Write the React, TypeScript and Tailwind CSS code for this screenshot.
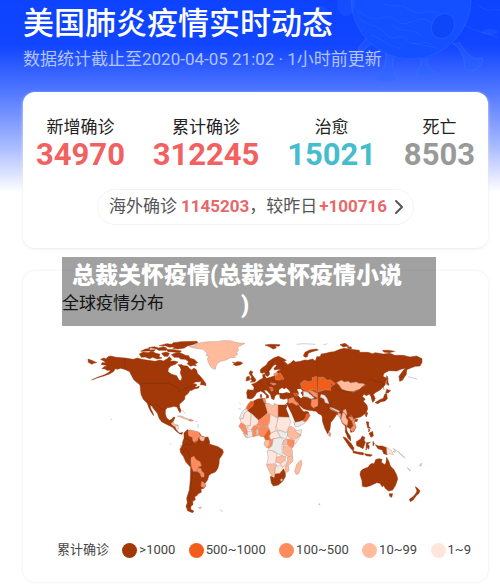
import { ChevronRight } from 'lucide-react';

const STATS = [
  { label: '新增确诊', value: '34970', color: 'text-[#f26161]' },
  { label: '累计确诊', value: '312245', color: 'text-[#f26161]' },
  { label: '治愈', value: '15021', color: 'text-[#45bdcd]' },
  { label: '死亡', value: '8503', color: 'text-[#999999]' },
];

const LEGEND = [
  { label: '>1000', color: 'bg-[#a23708]' },
  { label: '500~1000', color: 'bg-[#f25d1b]' },
  { label: '100~500', color: 'bg-[#ff8a5c]' },
  { label: '10~99', color: 'bg-[#ffbb9c]' },
  { label: '1~9', color: 'bg-[#ffe6dd]' },
];

const L1 = '#a23708';
const L2 = '#f25d1b';
const L3 = '#ff8a5c';
const L4 = '#ffbb9c';
const L5 = '#ffe6dd';
const NONE = '#ececec';
const SEA = '#ffffff';

type Shape = [fill: string, d: string];

const AMERICAS: Shape[] = [
  // Canada, USA, Mexico
  [L1, 'M62 88L72 84L78 87L84 80L92 78L108 82L135 84L160 88L172 84L185 88L205 91L225 94L240 90L250 93L262 86L268 80L275 88L270 94L283 93L294 96L286 103L272 108L265 116L264 125L275 133L290 137L297 150L303 152L306 141L301 130L303 118L300 110L308 107L322 108L330 117L335 120L342 114L350 120L352 130L362 140L370 150L360 155L345 156L338 163L345 161L351 165L344 170L350 172L358 168L356 174L342 177L336 181L329 182L325 190L315 198L314 208L308 214L298 223L299 232L303 242L300 248L295 240L291 231L281 229L275 231L262 233L256 240L256 252L260 264L268 271L276 268L279 262L285 262L280 274L273 280L279 286L290 292L291 303L300 310L308 307L306 313L300 312L288 303L278 292L262 284L246 276L238 266L232 250L219 234L216 228L210 226L213 237L219 249L221 257L213 246L207 234L202 220L190 208L183 193L180 165L174 160L162 150L155 137L148 124L138 119L122 115L113 118L106 116L100 125L88 132L74 137L50 144L35 150L55 141L74 134L87 127L92 121L80 121L76 117L66 116L72 110L80 109L76 105L64 104L66 98L77 98L73 94Z'],
  [L1, 'M24 87L38 92L50 98L42 99L36 103L25 97Z'],
  [L1, 'M178 72L190 66L204 68L215 64L228 70L240 73L237 80L246 84L232 87L218 82L209 86L196 81L184 82Z'],
  [L1, 'M182 64L194 58L210 55L208 60L226 59L222 64L206 63Z'],
  [L1, 'M206 53L224 50L236 54L250 50L260 54L258 61L236 61L228 56Z'],
  [L1, 'M245 70L258 66L268 70L264 79L252 79Z'],
  [L1, 'M238 47L260 41L275 43L280 38L304 35L350 34L354 38L338 44L322 48L313 54L294 57L278 55L285 50L268 52L256 47Z'],
  [L1, 'M258 58L282 59L304 63L300 68L282 66L264 65Z'],
  [L1, 'M274 74L288 68L304 70L316 76L326 77L330 85L342 88L353 98L345 101L349 108L340 106L332 109L322 102L326 95L316 88L302 87L296 82L282 82Z'],
  [L1, 'M294 104L306 104L312 111L302 113Z'],
  [L1, 'M364 154L370 151L377 160L378 167L371 165L361 164Z'],
  [L4, 'M328 50L346 47L342 43L362 38L386 35L410 35L428 32L450 32L464 36L478 39L495 40L482 47L472 52L476 60L470 68L473 74L462 77L467 82L451 83L438 90L422 94L413 100L408 108L406 118L397 115L390 108L385 96L382 87L386 80L378 76L382 70L374 63L370 58L354 56L343 54Z'],
  [L1, 'M457 97L466 98L472 95L484 96L488 100L480 105L468 107L460 103L464 101Z'],
  // Caribbean and Central America
  [L4, 'M292 258L304 258L315 263L325 268L315 267L302 262Z'],
  [L3, 'M322 269L331 267L342 272L332 274Z'],
  [L4, 'M273 281L280 276L283 283L294 285L292 292L282 289Z'],
  [L5, 'M285 289L295 287L294 302L289 299Z'],
  // South America
  [L1, 'M312 309L322 299L330 302L358 308L364 318L375 322L384 321L389 335L388 342L400 346L414 350L428 359L430 367L426 376L418 387L417 402L413 416L406 426L393 431L386 437L383 449L374 462L377 468L372 475L363 477L364 487L354 491L352 496L344 500L346 509L338 514L339 524L333 528L332 538L342 544L337 548L323 542L318 529L322 518L320 505L328 480L331 450L332 412L318 397L310 379L302 368L300 357L307 347L308 336L312 325Z'],
  [L3, 'M324 303L332 300L356 306L361 318L354 325L353 333L344 338L339 334L337 322L326 317Z'],
  [L4, 'M361 317L368 321L375 321L371 334L363 333L358 324Z'],
  [L3, 'M333 383L342 379L348 389L360 395L364 407L355 411L350 424L340 424L335 411L333 400Z'],
  [L3, 'M354 415L362 415L365 424L372 430L372 441L364 441L361 431L351 423Z'],
  [L3, 'M365 454L373 459L378 465L372 473L363 469Z'],
  [L4, 'M355 533L365 531L361 536Z'],
];

// Europe, Africa, Middle East and western Russia
const EMEA: Shape[] = [
  [L1, 'M300 80L290 84L276 83L270 93L263 87L248 91L239 90L226 94L212 96L205 91L197 99L188 104L183 98L176 95L184 91L172 84L160 79L146 84L137 90L129 96L124 105L112 113L106 119L107 128L113 130L118 127L123 137L129 139L134 132L132 124L138 116L144 108L151 103L155 107L147 115L148 120L161 118L168 119L158 123L153 130L147 138L136 142L125 145L121 140L119 132L113 134L114 145L105 149L96 156L89 160L80 163L87 171L86 181L68 179L65 187L67 205L75 207L84 204L91 196L95 188L107 183L116 188L125 197L124 205L131 203L130 196L121 188L117 180L125 181L136 193L140 206L147 209L149 200L155 193L164 193L165 205L176 208L188 205L189 217L182 222L186 234L196 251L207 277L210 286L225 281L243 271L253 255L250 246L241 244L237 246L228 236L220 224L226 228L235 236L247 240L262 242L273 244L282 252L300 250Z'],
  [L1, 'M72 130L76 122L84 126L80 132L87 142L93 149L90 155L76 157L82 151L76 148L80 141Z'],
  [L1, 'M65 141L73 139L74 150L63 153Z'],
  [L1, 'M120 45L137 43L165 44L163 48L150 49L154 54L144 57L135 51Z'],
  [L1, 'M235 77L240 67L254 60L274 57L280 60L261 65L250 70L247 80L240 82Z'],
  [L1, 'M106 194L110 193L110 203L106 202Z'],
  // inland seas
  [SEA, 'M162 180L171 173L178 178L183 173L193 182L196 189L184 187L174 190L162 189Z'],
  [SEA, 'M216 178L227 176L233 183L227 188L234 200L228 205L220 197L221 188Z'],
  [SEA, 'M184 219L188 228L200 252L211 278L207 279L195 257L184 239Z'],
  // eastern Europe
  [L2, 'M150 141L157 131L166 129L172 138L177 147L165 151L152 149Z'],
  [L3, 'M145 132L156 127L159 133L150 138Z'],
  [L3, 'M136 159L149 160L154 162L145 166Z'],
  [L2, 'M133 171L142 171L145 181L139 184Z'],
  [L3, 'M191 207L205 202L210 212L222 223L214 226L202 218L191 220Z'],
  [L2, 'M205 190L216 190L219 198L211 198Z'],
  [NONE, 'M207 277L222 275L234 271L240 279L222 289L211 291Z'],
  [L2, 'M234 272L242 262L244 252L250 252L256 256L249 268L242 276Z'],
  // central Asia
  [L2, 'M226 160L238 151L250 155L263 152L261 143L279 138L295 138L303 147L315 148L331 160L324 167L316 174L318 183L302 180L288 184L279 191L270 181L255 179L250 189L239 181L230 175Z'],
  [NONE, 'M235 183L248 187L259 196L268 204L259 207L246 201L235 200Z'],
  [L3, 'M251 181L261 182L272 188L280 192L292 190L288 200L277 203L265 197L256 188Z'],
  [L3, 'M286 185L303 181L318 184L304 192L291 194Z'],
  [NONE, 'M282 195L292 194L303 198L304 206L288 206Z'],
  [L3, 'M260 209L273 208L282 203L290 207L283 215L280 227L266 235L258 226Z'],
  // north Africa
  [L1, 'M84 214L98 207L119 205L120 215L127 226L128 248L109 267L101 271L66 240L73 231L84 225Z'],
  [L2, 'M62 236L68 224L77 213L86 214L84 227L70 239Z'],
  [L3, 'M113 206L121 205L122 220L117 217Z'],
  [NONE, 'M43 266L49 250L58 238L68 238L66 246L58 250L55 265Z'],
  [L5, 'M45 267L55 265L58 250L68 242L79 252L76 287L57 287L50 282Z'],
  [L5, 'M79 250L101 271L99 283L87 286L79 299L69 297L66 289L76 287Z'],
  [L4, 'M120 221L131 220L144 228L148 220L160 225L160 264L137 252L128 249Z'],
  [L1, 'M160 225L175 225L187 225L183 236L192 259L192 262L160 260Z'],
  [L3, 'M101 271L128 249L136 254L134 275L128 288L102 290L94 285L99 281Z'],
  [L5, 'M136 253L159 265L157 282L151 291L154 301L136 310L129 292L134 275Z'],
  [L5, 'M160 261L192 262L198 275L190 296L181 308L168 301L157 301L154 287Z'],
  // west Africa
  [L3, 'M41 289L48 278L58 283L66 297L49 298Z'],
  [L3, 'M48 299L66 298L70 313L62 315L55 306Z'],
  [L4, 'M54 309L61 315L67 323L60 320Z'],
  [NONE, 'M67 305L81 303L83 319L68 323Z'],
  [L3, 'M78 300L87 287L98 288L101 295L94 300L83 302Z'],
  [L3, 'M82 303L92 299L95 317L84 321Z'],
  [L4, 'M94 301L101 296L100 317L96 318Z'],
  [L3, 'M101 292L114 289L129 290L131 299L121 310L116 320L108 320L101 315Z'],
  [L2, 'M116 319L123 308L132 296L137 309L133 321L139 331L121 330Z'],
  // central and east Africa
  [L5, 'M134 317L139 309L155 302L168 322L151 326L136 329Z'],
  [NONE, 'M157 303L168 302L181 308L190 303L187 318L181 327L166 321Z'],
  [L4, 'M190 294L199 288L210 297L214 306L228 315L213 325L197 326L187 318Z'],
  [L5, 'M211 302L230 299L227 316L212 341L209 343L208 330L219 322L228 315L215 307Z'],
  [L4, 'M120 332L134 331L134 343L125 353L117 344Z'],
  [L3, 'M134 331L147 326L143 343L134 356L126 353L134 344Z'],
  [NONE, 'M145 326L167 323L176 330L171 345L172 377L158 372L151 365L136 362L130 356L141 348Z'],
  [L4, 'M176 331L186 326L189 343L173 345Z'],
  [L3, 'M187 327L207 329L207 347L201 355L188 345Z'],
  [L4, 'M174 348L187 347L201 356L203 376L190 380L175 371Z'],
  [L5, 'M126 361L140 362L154 370L156 376L151 401L125 403L130 384Z'],
  [L4, 'M154 382L170 377L183 379L180 392L167 401L154 397Z'],
  [L4, 'M187 381L203 378L204 393L190 407L192 422L180 430L180 411L188 396Z'],
  [L5, 'M166 401L179 391L186 396L180 408L172 411Z'],
  [L4, 'M124 404L156 404L150 413L150 434L141 440L133 425Z'],
  [L5, 'M151 411L166 404L176 417L163 430L150 434Z'],
  [L1, 'M136 439L148 443L151 432L164 431L176 417L181 431L181 440L173 454L160 465L145 468L139 459Z'],
  [NONE, 'M166 449L171 446L173 451L168 454Z'],
  [L4, 'M228 389L231 401L222 430L214 434L209 424L215 403Z'],
];

const ASIA_PACIFIC: Shape[] = [
  [L1, 'M0 80L4 72L18 70L28 67L42 65L60 58L73 55L91 58L118 61L119 67L144 67L157 71L166 68L190 72L210 70L224 76L249 76L270 81L290 78L306 86L306 97L300 108L286 109L272 114L260 119L259 133L247 151L239 154L237 139L250 121L257 115L242 118L231 123L207 122L192 130L189 139L200 145L195 165L180 180L168 187L160 193L166 206L159 212L154 201L148 192L139 197L132 192L127 200L136 207L130 214L141 226L143 237L137 250L123 260L107 265L102 267L104 283L108 291L101 305L92 307L91 297L79 289L81 304L91 326L84 322L76 306L76 288L67 280L60 262L51 252L43 264L32 278L30 298L23 312L15 296L8 276L6 257L-4 250L-10 80Z'],
  [L1, 'M60 44L75 40L86 48L70 51Z'],
  [L1, 'M82 50L94 51L94 57L84 55Z'],
  [L1, 'M188 61L205 61L224 64L207 68L191 66Z'],
  [L1, 'M200 137L203 140L204 157L207 166L200 163Z'],
  [L1, 'M200 178L212 182L205 188L197 190Z'],
  [L1, 'M200 191L202 206L195 213L183 215L173 221L165 218L179 209L190 205L194 193Z'],
  [L1, 'M154 197L159 204L164 211L158 217L155 208Z'],
  [L2, 'M-5 142L11 142L22 151L31 149L46 161L39 167L31 171L32 181L16 179L-5 186Z'],
  [L4, 'M50 158L64 151L73 156L86 154L91 159L109 156L115 160L131 161L136 165L126 171L119 178L100 186L80 182L65 177L58 166Z'],
  [NONE, 'M3 193L14 196L21 205L27 221L16 218L11 206L1 202Z'],
  [NONE, 'M28 231L40 235L58 243L57 249L43 243L30 237Z'],
  [L4, 'M66 257L70 241L77 238L81 251L77 261L84 272L81 287L69 280L63 269Z'],
  [L3, 'M85 261L96 257L104 277L108 291L98 306L91 298L100 287L97 275Z'],
  [L3, 'M27 307L32 309L32 319L26 318Z'],
  [L4, 'M54 248L62 251L62 263L54 257Z'],
  [L1, 'M105 268L113 268L111 275L105 274Z'],
  [L1, 'M139 246L143 249L139 261L136 255Z'],
  // Indonesia and Philippines
  [L1, 'M69 321L77 323L94 341L102 354L100 363L91 354L80 338Z'],
  [L1, 'M78 300L83 308L91 318L92 333L84 325Z'],
  [L1, 'M99 363L113 366L130 368L130 375L115 372L99 368Z'],
  [L1, 'M133 371L145 373L157 375L151 379L138 377Z'],
  [L1, 'M109 335L122 327L127 318L135 323L132 330L136 337L129 356L118 350L110 347Z'],
  [L1, 'M139 338L151 337L143 342L148 348L146 358L141 352L138 361Z'],
  [L1, 'M159 334L163 341L159 348Z'],
  [L1, 'M139 275L146 276L146 289L152 295L143 294Z'],
  [L1, 'M147 310L158 304L160 318L153 322Z'],
  [L1, 'M146 297L150 300L146 306Z'],
  [L1, 'M166 344L175 348L187 348L200 353L201 374L191 371L187 360L174 356Z'],
  [L5, 'M200 353L214 361L220 374L210 371L201 374Z'],
  [NONE, 'M220 355L230 362L224 367L219 364L226 362Z'],
  [NONE, 'M233 363L239 369L249 377L255 384L246 378Z'],
  [NONE, 'M262 413L272 422L269 423Z'],
  [NONE, 'M300 403L305 400L304 408L299 408Z'],
  // Australia and New Zealand
  [L1, 'M122 424L128 418L144 412L151 403L157 400L162 402L167 389L175 386L186 388L184 397L194 404L198 398L200 382L207 395L211 408L222 419L230 435L233 447L227 465L218 480L206 483L197 476L190 466L187 471L180 460L170 458L151 467L138 471L127 469L126 452L120 434Z'],
  [L1, 'M208 491L218 491L215 502L209 499Z'],
  [L1, 'M286 470L293 475L300 482L296 491L290 496L287 491L291 483Z'],
  [L1, 'M287 491L289 497L279 510L271 515L268 508L279 500Z'],
];

const BORDERS = [
  'M135 84V117L146 124',
  'M180 163L190 160L266 160L278 166L292 172L296 185L310 178L324 173L336 167',
  'M202 219L216 225L231 223L242 236L255 241',
  'M300 348L314 346L322 342L331 345L339 338L350 333L372 334L388 338',
  'M307 368L318 355L325 366L329 378L333 384',
  'M314 325L323 328L334 337',
  'M337 427L335 455L330 490L326 530',
  'M373 442L365 454',
  'M505 205V186M525 180L538 184M538 152L545 164L554 174M560 148L567 166L582 171M575 148L590 157L607 148',
  'M580 95L570 109L561 128M603 93L611 116',
  'M645 190L655 203L661 222M700 235L713 230L720 217L733 209M757 209L750 231L739 247',
  'M751 161L769 175L790 185L820 185L839 178L858 161L870 147L889 155L907 158L912 180',
  'M743 230L777 249L792 247L801 260L825 260',
];

function drawShapes(shapes: Shape[]) {
  return shapes.map(([fill, d], i) => (
    <path key={i} d={d} fill={fill} stroke={fill === SEA ? 'none' : fill === L1 ? '#993509' : '#b99a90'} strokeWidth={1.5} />
  ));
}

function WorldMap() {
  return (
    <svg viewBox="0 0 1080 600" className="block w-full" role="img" aria-label="全球疫情分布">
      <g>{drawShapes(AMERICAS)}</g>
      <g transform="translate(435 0)">{drawShapes(EMEA)}</g>
      <g transform="translate(720 0)">{drawShapes(ASIA_PACIFIC)}</g>
      <g fill="none" stroke="#7c2c0a" strokeWidth={1.5}>
        {BORDERS.map((d) => <path key={d} d={d} />)}
      </g>
      <g fill="none" stroke="#b8b8b8" strokeWidth={2}>
        <path d="M308 240l3 5l4 6M346 274l6 2M354 282v12M270 342h4M92 268h4M478 219l4 2M475 236l8 2M650 43l20 -2l36 2M730 45l12 -4M984 140l28 7M928 292l2 -5M715 523h6M718 520v6M420 540l8 4" />
      </g>
    </svg>
  );
}

function VirusArt() {
  return (
    <svg viewBox="0 0 190 100" className="absolute top-0 right-0 w-[190px]" fill="none" aria-hidden="true">
      <g fill="#2a66ff" fillOpacity="0.35" stroke="#3b78ff" strokeOpacity="0.45">
        <path d="M56 38C53 44 47 46 49 51C58 49 60 43 67 43M76 53C76 66 74 70 66 76C61 82 81 84 88 80C82 73 82 63 84 56M111 59C112 65 108 69 106 74C112 78 124 77 125 72C118 69 117 64 117 58M142 43C154 50 154 60 155 69C162 75 175 65 172 58C163 61 158 55 149 42" />
      </g>
      <circle cx="101" cy="-1" r="60" fill="#1450ff" stroke="#2c6cff" strokeOpacity="0.5" />
      <ellipse cx="133" cy="26" rx="11" ry="13" transform="rotate(35 133 26)" fill="#0e46fa" stroke="#2c6cff" strokeOpacity="0.5" />
      <g stroke="#347aff" strokeOpacity="0.25">
        <path d="M46 9C57 19 64 20 75 17S86 27 98 23S116 17 123 24M49 18C61 29 69 24 76 34S91 31 97 40S116 38 122 45M61 35C75 40 81 48 90 48M74 4C83 8 91 3 100 10S119 7 127 13M82 25C91 34 101 27 110 35M103 43C113 47 119 44 127 49" />
        <path d="M153 24C169 34 178 32 188 38M168 5C180 15 185 6 190 11" />
      </g>
      <g fill="#4c86ff" fillOpacity="0.15">
        <circle cx="11" cy="13" r="7" />
        <ellipse cx="36" cy="5" rx="9" ry="11" />
        <ellipse cx="180" cy="32" rx="8" ry="3" />
      </g>
    </svg>
  );
}

export default function App() {
  return (
    <main className="relative bg-white bg-[linear-gradient(to_bottom,#0d43ff_0px,#1145ff_45px,#557bff_95px,#a6b8ff_145px,#ffffff_192px)] pr-3 pb-0.5 pl-[23px] font-['Roboto','Noto_Sans_CJK_SC',sans-serif]">
      <VirusArt />
      <header className="relative h-[92px] pt-[5px]">
        <h1 className="text-[31px] leading-[38px] font-medium text-white">美国肺炎疫情实时动态</h1>
        <p className="pt-1 text-[17px] leading-6 text-[#b3c4ff]">数据统计截止至2020-04-05 21:02 · 1小时前更新</p>
      </header>

      <section className="relative rounded-xl bg-white px-[13px] pt-[23px] pb-[23px] shadow-[0_1px_3px_#eee8ea]">
        <dl className="flex justify-between text-center">
          {STATS.map((s) => (
            <div key={s.label}>
              <dt className="text-[17px] leading-6 text-[#222222]">{s.label}</dt>
              <dd className={`text-[31px] leading-8 font-bold ${s.color}`}>{s.value}</dd>
            </div>
          ))}
        </dl>
        <div className="flex justify-center pt-[18px]">
          <button type="button" className="flex h-9 items-center rounded-full border border-[#f5f3f4] pr-1.5 pl-[11px] text-[17px] whitespace-nowrap text-[#555555]">
            <span>海外确诊</span>
            <b className="pl-1 text-[#e8686a]">1145203</b>
            <span>，较昨日</span>
            <b className="pl-0.5 text-[#e8686a]">+100716</b>
            <ChevronRight className="-mr-1 size-6" strokeWidth={2} />
          </button>
        </div>
      </section>

      <section className="relative mt-[23px] rounded-xl bg-white pt-5 pb-[22px] shadow-[0_0_3px_#eee8ea]">
        <h2 className="pl-[39px] text-[17px] leading-6 text-[#222222]">全球疫情分布</h2>
        <div className="pt-[15px] pr-12 pl-[57px]">
          <WorldMap />
        </div>
        <div className="flex items-center justify-between pt-[10px] pr-[17px] pl-[34px] text-[13px] leading-5 text-[#444444]">
          <span>累计确诊</span>
          {LEGEND.map((item) => (
            <span key={item.label} className="flex items-center gap-0.5">
              <i className={`size-[15px] rounded-full ${item.color}`} />
              {item.label}
            </span>
          ))}
        </div>

        {/* Caption banner over the top of the card */}
        <div className="absolute -top-3.5 right-[52px] left-[39px] bg-black/37 pt-1 pb-[5px] text-center text-[23px] leading-[30px] font-black text-white">
          <p className="pr-6 whitespace-nowrap">总裁关怀疫情(总裁关怀疫情小说</p>
          <p className="pr-2">)</p>
        </div>
      </section>
    </main>
  );
}
